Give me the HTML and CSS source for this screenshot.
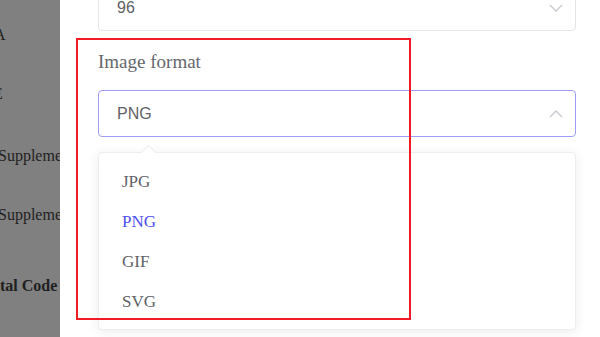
FILE: index.html
```html
<!DOCTYPE html>
<html lang="en">
<head>
    <meta charset="UTF-8">
    <meta name="viewport" content="width=device-width, initial-scale=1.0">
    <title>Export settings</title>
    <link rel="stylesheet" href="styles.css">
</head>
<body>
    <div class="page">
        <!-- Contenido de fondo bajo la capa gris -->
        <div class="backdrop">
            <div class="bg-line line-a">A</div>
            <div class="bg-line line-e">E</div>
            <div class="bg-line line-s1">Supplement</div>
            <div class="bg-line line-s2">Supplement</div>
            <div class="bg-line line-code">tal Code</div>
        </div>

        <div class="panel">
            <div class="select">
                <span class="select-value">96</span>
                <svg class="chevron" width="14" height="8" viewBox="0 0 14 8">
                    <polyline points="1,1 7,7 13,1" fill="none" stroke="#c9cacf" stroke-width="1.4"/>
                </svg>
            </div>

            <label class="field-label">Image format</label>
            <div class="select select-open">
                <span class="select-value">PNG</span>
                <svg class="chevron" width="14" height="8" viewBox="0 0 14 8">
                    <polyline points="1,7 7,1 13,7" fill="none" stroke="#c9cacf" stroke-width="1.4"/>
                </svg>
            </div>

            <ul class="dropdown">
                <li>JPG</li>
                <li class="selected">PNG</li>
                <li>GIF</li>
                <li>SVG</li>
            </ul>
        </div>

        <div class="highlight"></div>
    </div>
</body>
</html>
```

FILE: styles.css
```css
body {
    margin: 0;
    background-color: #fff;
    overflow: hidden;
}

.page {
    position: relative;
    display: flex;
    height: 337px;
    overflow: hidden;
}

.backdrop {
    width: 60px;
    flex-shrink: 0;
    background-color: #808080;
    overflow: hidden;
    font-family: "Liberation Serif", serif;
    font-size: 16px;
    color: #1f1f1f;
}

.bg-line {
    line-height: 20px;
    white-space: nowrap;
}

.line-a {
    margin-top: 25px;
    margin-left: -6px;
}

.line-e {
    margin-top: 39px;
    margin-left: -7px;
}

.line-s1 {
    margin-top: 42px;
    margin-left: -2px;
}

.line-s2 {
    margin-top: 39px;
    margin-left: -2px;
}

.line-code {
    margin-top: 51px;
    margin-left: 0;
    font-weight: bold;
}

.panel {
    flex: 1;
    background-color: #fff;
    padding: 0 24px 0 38px;
    margin-top: -16px;
}

.select {
    display: flex;
    align-items: center;
    justify-content: space-between;
    height: 45px;
    border: 1px solid #e4e5e9;
    border-radius: 4px;
    padding: 0 12px 0 18px;
    font-family: "Liberation Sans", Arial, sans-serif;
    font-size: 16px;
    color: #606266;
}

.select-open {
    border-color: #9d9df6;
}

.field-label {
    display: block;
    margin: 19px 0 16px;
    line-height: 24px;
    font-family: "Liberation Serif", serif;
    font-size: 19px;
    color: #66686e;
}

.dropdown {
    position: relative;
    list-style: none;
    margin: 15px 0 0;
    padding: 9px 0 7px;
    border: 1px solid #eceef2;
    border-radius: 4px;
    background-color: #fff;
    box-shadow: 0 2px 12px rgba(0, 0, 0, 0.08);
}

/* flechita del popover */
.dropdown::before {
    content: "";
    position: absolute;
    top: -6px;
    left: 44px;
    width: 10px;
    height: 10px;
    background-color: #fff;
    border-top: 1px solid #eceef2;
    border-left: 1px solid #eceef2;
    transform: rotate(45deg);
}

.dropdown li {
    height: 40px;
    line-height: 40px;
    padding-left: 23px;
    font-family: "Liberation Serif", serif;
    font-size: 17px;
    color: #606266;
}

.dropdown li.selected {
    color: #4f4ff0;
}

/* recuadro rojo de anotación */
.highlight {
    position: absolute;
    left: 76px;
    top: 38px;
    width: 331px;
    height: 278px;
    border: 2px solid #f01b24;
    pointer-events: none;
}
```
